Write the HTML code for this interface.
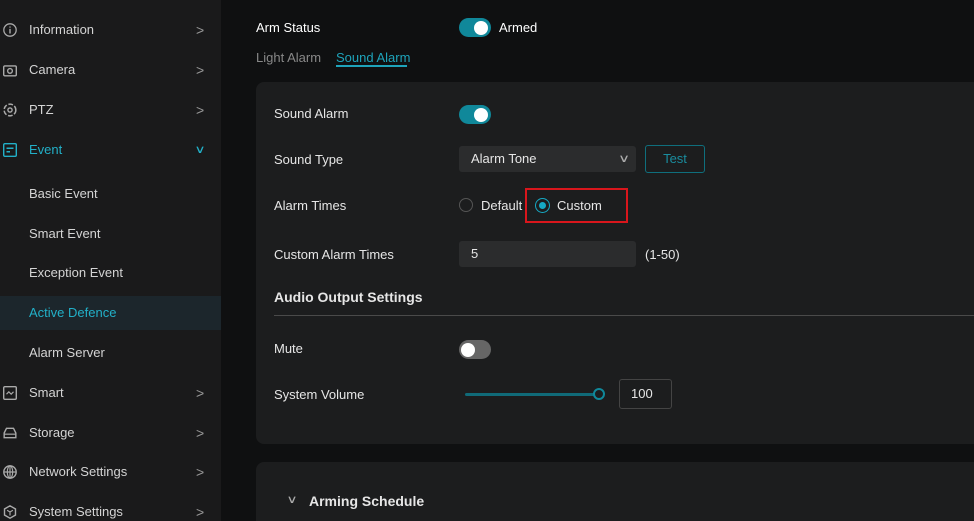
<!DOCTYPE html>
<html style="width:974px;height:521px;overflow:hidden"><head><style>
*{margin:0;padding:0;box-sizing:border-box}
body{width:974px;height:521px;overflow:hidden;background:#0f1011;font-family:"Liberation Sans",sans-serif;font-size:13px;color:#e6e6e6;position:relative}
.sb{position:absolute;left:0;top:0;width:221px;height:521px;background:#1a1a1b}
.it{position:absolute;left:0;width:221px;height:34px;line-height:34px;padding-left:29px;color:#d4d4d4}
.it .ar{position:absolute;left:196px;top:0;color:#999;font-size:14px}
.ic{position:absolute;left:3px;top:10px;width:14px;height:14px}
.act{background:#1c262c;color:#22b0c8}
.a{position:absolute;white-space:nowrap}
.panel{position:absolute;left:256px;top:82px;width:740px;height:362px;background:#1c1d1e;border-radius:8px}
.panel2{position:absolute;left:256px;top:462px;width:740px;height:59px;background:#1c1d1e;border-radius:8px 8px 0 0}
.tg{position:absolute;width:32px;height:19px;border-radius:10px;background:#10889a}
.tg::after{content:"";position:absolute;right:3px;top:2.5px;width:14px;height:14px;border-radius:50%;background:#fff}
.tg.off{background:#666}
.tg.off::after{right:auto;left:2px}
.box{position:absolute;background:#2b2c2d;border-radius:3px;height:26px;line-height:26px;padding-left:12px;color:#e6e6e6}
</style></head><body>
<div class="sb">
<div class="it" style="top:13px"><svg class="ic" viewBox="0 0 12 12"><circle cx="6" cy="6" r="5.3" fill="none" stroke="#aaa" stroke-width="1.1"/><path d="M6 5v4M6 3v1" stroke="#aaa" stroke-width="1.2"/></svg>Information<span class="ar">&gt;</span></div>
<div class="it" style="top:53px"><svg class="ic" viewBox="0 0 12 12"><rect x="0.6" y="2.5" width="10.8" height="8.5" rx="1" fill="none" stroke="#aaa" stroke-width="1.2"/><circle cx="6" cy="6.8" r="2" fill="none" stroke="#aaa" stroke-width="1.2"/></svg>Camera<span class="ar">&gt;</span></div>
<div class="it" style="top:93px"><svg class="ic" viewBox="0 0 12 12"><circle cx="6" cy="6" r="5" fill="none" stroke="#aaa" stroke-width="1.3" stroke-dasharray="4 1.5"/><circle cx="6" cy="6" r="1.8" fill="none" stroke="#aaa" stroke-width="1.2"/></svg>PTZ<span class="ar">&gt;</span></div>
<div class="it" style="top:133px;color:#22b0c8"><svg class="ic" viewBox="0 0 12 12"><rect x="0.6" y="0.6" width="10.8" height="10.8" rx="1" fill="none" stroke="#22b0c8" stroke-width="1.2"/><path d="M3 4.5h6M3 7.5h3" stroke="#22b0c8" stroke-width="1.2"/></svg>Event<span class="ar" style="color:#22b0c8;font-size:11px;transform:scaleX(1.4)">&#x2228;</span></div>
<div class="it" style="top:177px">Basic Event</div>
<div class="it" style="top:217px">Smart Event</div>
<div class="it" style="top:256px">Exception Event</div>
<div class="it act" style="top:296px">Active Defence</div>
<div class="it" style="top:336px">Alarm Server</div>
<div class="it" style="top:376px"><svg class="ic" viewBox="0 0 12 12"><rect x="0.6" y="0.6" width="10.8" height="10.8" rx="1" fill="none" stroke="#aaa" stroke-width="1.2"/><path d="M3 7l2-2 2 2 2-2" fill="none" stroke="#aaa"/></svg>Smart<span class="ar">&gt;</span></div>
<div class="it" style="top:416px"><svg class="ic" viewBox="0 0 12 12"><path d="M1 6l2-4h6l2 4v4H1z" fill="none" stroke="#aaa" stroke-width="1.2"/><path d="M1 7h10" stroke="#aaa"/></svg>Storage<span class="ar">&gt;</span></div>
<div class="it" style="top:455px"><svg class="ic" viewBox="0 0 12 12"><circle cx="6" cy="6" r="5.3" fill="none" stroke="#aaa" stroke-width="1.2"/><path d="M1 6h10M6 1v10" stroke="#aaa"/><ellipse cx="6" cy="6" rx="2.3" ry="5.3" fill="none" stroke="#aaa"/></svg>Network Settings<span class="ar">&gt;</span></div>
<div class="it" style="top:495px"><svg class="ic" viewBox="0 0 12 12"><path d="M6 .7l4.7 2.7v5.2L6 11.3 1.3 8.6V3.4z" fill="none" stroke="#aaa" stroke-width="1.2"/><path d="M3.5 4.5L6 6l2.5-1.5M6 6v3" fill="none" stroke="#aaa"/></svg>System Settings<span class="ar">&gt;</span></div>
</div>

<div class="a" style="left:256px;top:20px;color:#fff">Arm Status</div>
<div class="tg" style="left:459px;top:18px"></div>
<div class="a" style="left:499px;top:20px;color:#fff">Armed</div>
<div class="a" style="left:256px;top:50px;color:#888">Light Alarm</div>
<div class="a" style="left:336px;top:50px;color:#1ea4bb">Sound Alarm</div>
<div class="a" style="left:336px;top:65px;width:71px;height:2px;background:#1ea4bb"></div>

<div class="panel"></div>
<div class="a" style="left:274px;top:106px">Sound Alarm</div>
<div class="tg" style="left:459px;top:105px"></div>
<div class="a" style="left:274px;top:152px">Sound Type</div>
<div class="box" style="left:459px;top:146px;width:177px">Alarm Tone<span style="position:absolute;right:8px;top:0;color:#aaa;font-size:11px;transform:scaleX(1.5)">&#x2228;</span></div>
<div class="a" style="left:645px;top:145px;width:60px;height:28px;border:1px solid #0f6f7d;border-radius:3px;color:#1a8c9e;text-align:center;line-height:26px">Test</div>
<div class="a" style="left:274px;top:198px">Alarm Times</div>
<div class="a" style="left:459px;top:198px;width:14px;height:14px;border-radius:50%;border:1px solid #555"></div>
<div class="a" style="left:481px;top:198px">Default</div>
<div class="a" style="left:525px;top:188px;width:103px;height:35px;border:2px solid #d8161c"></div>
<div class="a" style="left:535px;top:198px;width:15px;height:15px;border-radius:50%;border:1.5px solid #16a9c4"><div style="margin:2.5px;width:7px;height:7px;border-radius:50%;background:#16a9c4"></div></div>
<div class="a" style="left:557px;top:198px">Custom</div>
<div class="a" style="left:274px;top:247px">Custom Alarm Times</div>
<div class="box" style="left:459px;top:241px;width:177px">5</div>
<div class="a" style="left:645px;top:247px">(1-50)</div>
<div class="a" style="left:274px;top:289px;font-size:14px;font-weight:bold">Audio Output Settings</div>
<div class="a" style="left:274px;top:315px;width:700px;height:1px;background:#4a4a4a"></div>
<div class="a" style="left:274px;top:341px">Mute</div>
<div class="tg off" style="left:459px;top:340px"></div>
<div class="a" style="left:274px;top:387px">System Volume</div>
<div class="a" style="left:465px;top:393px;width:134px;height:3px;background:#106a78;border-radius:2px"></div>
<div class="a" style="left:593px;top:388px;width:12px;height:12px;border-radius:50%;border:2px solid #10889a;background:#1c1d1e"></div>
<div class="a" style="left:619px;top:379px;width:53px;height:30px;border:1px solid #444;border-radius:3px;line-height:28px;padding-left:11px">100</div>

<div class="panel2"></div>
<div class="a" style="left:288px;top:493px;color:#aaa;font-size:11px;transform:scaleX(1.4)">&#x2228;</div>
<div class="a" style="left:309px;top:493px;font-size:14px;font-weight:bold">Arming Schedule</div>
</body></html>
